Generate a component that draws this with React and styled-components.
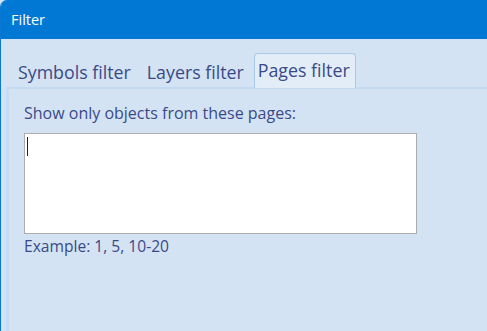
import React from "react";
import styled, { createGlobalStyle } from "styled-components";

const GlobalStyle = createGlobalStyle`
  html, body {
    margin: 0;
    padding: 0;
    width: 100%;
    height: 100%;
    overflow: hidden;
    background: #d4e3f3;
  }
  #root {
    height: 100%;
  }
`;

const Window = styled.div`
  height: 100%;
  display: flex;
  flex-direction: column;
  background: #d4e3f3;
  border-left: 1px solid #0a78d4;
  border-top-left-radius: 7px;
  overflow: hidden;
  font-family: "Open Sans", "Noto Sans", sans-serif;
  color: #3a4a88;
`;

const TitleBar = styled.div`
  height: 39px;
  flex: none;
  display: flex;
  align-items: center;
  padding-left: 10px;
  background: #0078d4;
  color: #ffffff;
  font-size: 14.5px;
`;

const Body = styled.div`
  flex: 1;
  display: flex;
  flex-direction: column;
  padding: 13px 0 0 5px;
`;

const TabStrip = styled.div`
  display: flex;
  align-items: flex-end;
  height: 35px;
  padding-left: 4px;
  position: relative;
  z-index: 1;
`;

const Tab = styled.div`
  box-sizing: border-box;
  height: ${(p) => (p.$active ? "35px" : "31px")};
  display: flex;
  align-items: center;
  padding: ${(p) => (p.$active ? "0 5px 2px 3px" : "0 5px 0")};
  margin: ${(p) => (p.$active ? "0 0 -1px 2px" : "0 3px")};
  font-size: 17.8px;
  white-space: nowrap;
  background: ${(p) => (p.$active ? "#e3edf8" : "transparent")};
  border: ${(p) => (p.$active ? "1px solid #a9c9ea" : "none")};
  border-bottom: none;
  border-radius: 4px 4px 0 0;
`;

const Panel = styled.div`
  flex: 1;
  display: flex;
  flex-direction: column;
  align-items: flex-start;
  padding: 14px 0 0 15px;
  border-top: 2px solid #c3daf3;
  border-left: 3px solid #c6dcf4;
  background: #d4e3f3;
`;

const Label = styled.div`
  font-size: ${(p) => (p.$small ? "15.6px" : "16px")};
  line-height: 20px;
`;

const Field = styled.div`
  position: relative;
  margin: 10px 0 2px;
`;

const TextArea = styled.textarea`
  display: block;
  box-sizing: border-box;
  width: 393px;
  height: 101px;
  padding: 2px 3px;
  border: 1.5px solid #adadad;
  background: #ffffff;
  resize: none;
  outline: none;
  font-family: "Open Sans", sans-serif;
  font-size: 14px;
  color: #000;
`;

const Caret = styled.span`
  position: absolute;
  left: 3px;
  top: 4px;
  width: 1px;
  height: 19px;
  background: #222;
`;

export default function App() {
  return (
    <>
      <GlobalStyle />
      <Window>
        <TitleBar>Filter</TitleBar>
        <Body>
          <TabStrip>
            <Tab>Symbols filter</Tab>
            <Tab>Layers filter</Tab>
            <Tab $active>Pages filter</Tab>
          </TabStrip>
          <Panel>
            <Label>Show only objects from these pages:</Label>
            <Field>
              <TextArea defaultValue="" />
              <Caret />
            </Field>
            <Label $small>Example: 1, 5, 10-20</Label>
          </Panel>
        </Body>
      </Window>
    </>
  );
}
